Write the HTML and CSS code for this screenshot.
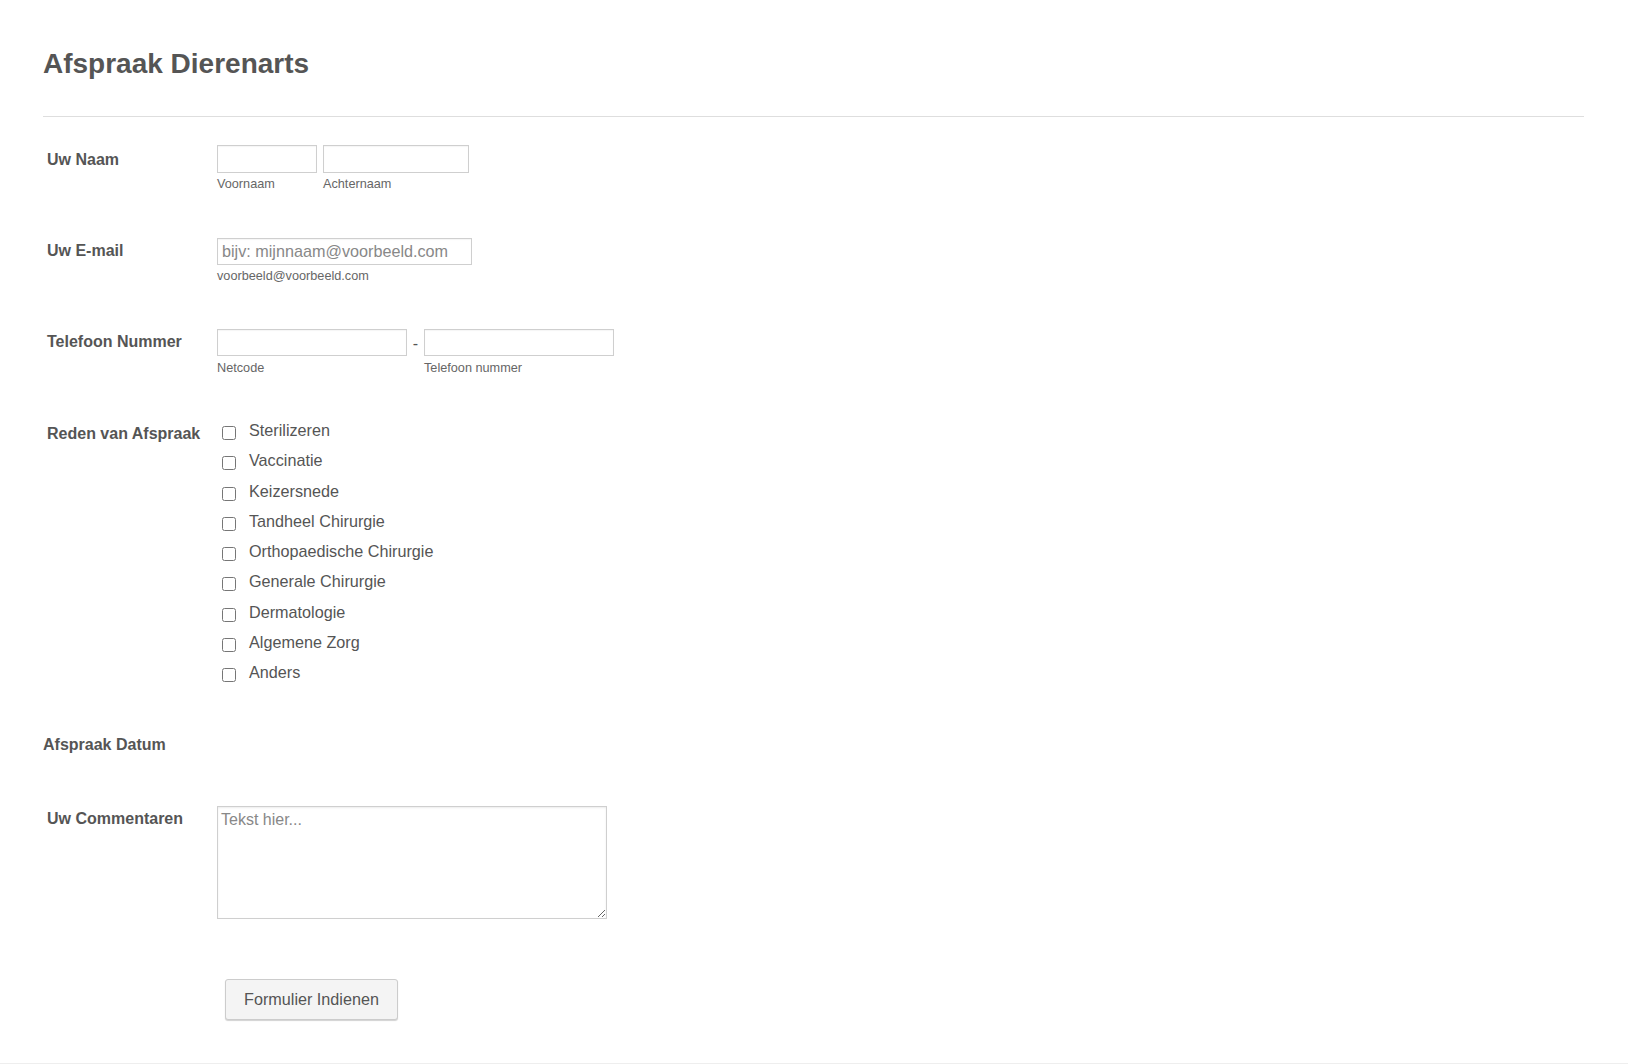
FILE: index.html
```html
<!DOCTYPE html>
<html lang="nl">
<head>
<meta charset="utf-8">
<title>Afspraak Dierenarts</title>
<link rel="stylesheet" href="styles.css">
</head>
<body>
<div class="page">
  <h1 class="title">Afspraak Dierenarts</h1>
  <hr class="divider">
  <ul class="form">
    <li class="row row-name">
      <label class="lbl">Uw Naam</label>
      <div class="field">
        <span class="part">
          <input class="in in-first" type="text">
          <label class="sublbl">Voornaam</label>
        </span>
        <span class="part">
          <input class="in in-last" type="text">
          <label class="sublbl">Achternaam</label>
        </span>
      </div>
    </li>
    <li class="row row-email">
      <label class="lbl">Uw E-mail</label>
      <div class="field">
        <span class="part">
          <input class="in in-email" type="email" placeholder="bijv: mijnnaam@voorbeeld.com">
          <label class="sublbl">voorbeeld@voorbeeld.com</label>
        </span>
      </div>
    </li>
    <li class="row row-phone">
      <label class="lbl">Telefoon Nummer</label>
      <div class="field">
        <span class="part">
          <input class="in in-phone" type="tel">
          <label class="sublbl">Netcode</label>
        </span>
        <span class="dash">-</span>
        <span class="part">
          <input class="in in-phone" type="tel">
          <label class="sublbl">Telefoon nummer</label>
        </span>
      </div>
    </li>
    <li class="row row-check">
      <label class="lbl lbl-check">Reden van Afspraak</label>
      <div class="field checklist">
        <label class="opt"><input type="checkbox" class="cb"><span>Sterilizeren</span></label>
        <label class="opt"><input type="checkbox" class="cb"><span>Vaccinatie</span></label>
        <label class="opt"><input type="checkbox" class="cb"><span>Keizersnede</span></label>
        <label class="opt"><input type="checkbox" class="cb"><span>Tandheel Chirurgie</span></label>
        <label class="opt"><input type="checkbox" class="cb"><span>Orthopaedische Chirurgie</span></label>
        <label class="opt"><input type="checkbox" class="cb"><span>Generale Chirurgie</span></label>
        <label class="opt"><input type="checkbox" class="cb"><span>Dermatologie</span></label>
        <label class="opt"><input type="checkbox" class="cb"><span>Algemene Zorg</span></label>
        <label class="opt"><input type="checkbox" class="cb"><span>Anders</span></label>
      </div>
    </li>
    <li class="row row-date">
      <label class="lbl lbl-date">Afspraak Datum</label>
    </li>
    <li class="row row-comment">
      <label class="lbl lbl-comment">Uw Commentaren</label>
      <div class="field">
        <textarea class="ta" placeholder="Tekst hier..."></textarea>
      </div>
    </li>
    <li class="row row-submit">
      <button class="btn" type="button">Formulier Indienen</button>
    </li>
  </ul>
</div>
</body>
</html>
```

FILE: styles.css
```css
html, body {
  margin: 0;
  padding: 0;
  background: #fff;
}

body {
  font-family: "Liberation Sans", Arial, sans-serif;
  color: #555;
  overflow: hidden;
}

.page {
  box-sizing: border-box;
  height: 1064px;
  padding: 48px 44px 0 43px;
  border-bottom: 1px solid #eeeeee;
}

.title {
  margin: 0;
  font-size: 28px;
  line-height: 32px;
  font-weight: bold;
  color: #555;
}

.divider {
  margin: 36px 0 0;
  height: 0;
  border: 0;
  border-top: 1px solid #dedede;
}

.form {
  list-style: none;
  margin: 28px 0 0;
  padding: 0;
}

.row {
  display: flex;
  align-items: flex-start;
}

.lbl {
  box-sizing: border-box;
  flex: 0 0 174px;
  width: 174px;
  padding: 5px 0 0 4px;
  font-size: 16px;
  line-height: 20px;
  font-weight: bold;
  color: #555;
}

.field {
  display: flex;
  align-items: flex-start;
}

.part {
  display: flex;
  flex-direction: column;
}

.in {
  box-sizing: border-box;
  margin: 0;
  height: 28px;
  padding: 0 4px;
  border: 1px solid #cfcfcf;
  box-shadow: inset 0 1px 1px rgba(0, 0, 0, 0.04);
  font-family: "Liberation Sans", Arial, sans-serif;
  font-size: 16.2px;
  color: #555;
  background: #fff;
  outline: none;
}

.in::placeholder,
.ta::placeholder {
  color: #888;
  opacity: 1;
}

.in-first {
  width: 100px;
  margin-right: 6px;
}

.in-last {
  width: 146px;
}

.in-email {
  width: 255px;
  height: 27px;
}

.in-phone {
  width: 190px;
  height: 27px;
}

.sublbl {
  display: block;
  margin-top: 4px;
  font-size: 12.7px;
  line-height: 15px;
  color: #666;
}

.dash {
  width: 17px;
  text-align: center;
  font-size: 16px;
  line-height: 18px;
  padding-top: 6px;
  color: #555;
}

.row-email {
  margin-top: 46px;
}

.row-email .lbl {
  padding-top: 3px;
}

.row-phone {
  margin-top: 45px;
}

.row-phone .lbl {
  padding-top: 3px;
}

.row-phone .sublbl {
  margin-top: 5px;
}

.row-check {
  margin-top: 44px;
}

.lbl-check {
  padding-top: 4px;
}

.checklist {
  flex-direction: column;
}

.opt {
  display: flex;
  align-items: flex-start;
  font-size: 16.2px;
  line-height: 20px;
  color: #555;
  margin-bottom: 10.25px;
}

.opt:last-child {
  margin-bottom: 0;
}

.cb {
  width: 14px;
  height: 14px;
  margin: 6px 13px 0 5px;
  flex: 0 0 14px;
}

.row-date {
  margin-top: 53px;
}

.lbl-date {
  padding: 0;
  flex-basis: auto;
  width: auto;
}

.row-comment {
  margin-top: 51px;
}

.lbl-comment {
  padding-top: 3px;
}

.ta {
  box-sizing: border-box;
  display: block;
  margin: 0;
  width: 390px;
  height: 113px;
  padding: 4px 3px;
  border: 1px solid #cfcfcf;
  box-shadow: inset 0 1px 2px rgba(0, 0, 0, 0.08);
  font-family: "Liberation Sans", Arial, sans-serif;
  font-size: 16px;
  color: #555;
  outline: none;
}

.row-submit {
  margin-top: 60px;
  padding-left: 182px;
}

.btn {
  box-sizing: border-box;
  width: 173px;
  height: 41px;
  margin: 0;
  padding: 0;
  border: 1px solid #cccccc;
  border-radius: 3px;
  background: #f4f4f4;
  box-shadow: 0 1px 1px rgba(0, 0, 0, 0.18);
  font-family: "Liberation Sans", Arial, sans-serif;
  font-size: 16.2px;
  color: #555;
}
```
